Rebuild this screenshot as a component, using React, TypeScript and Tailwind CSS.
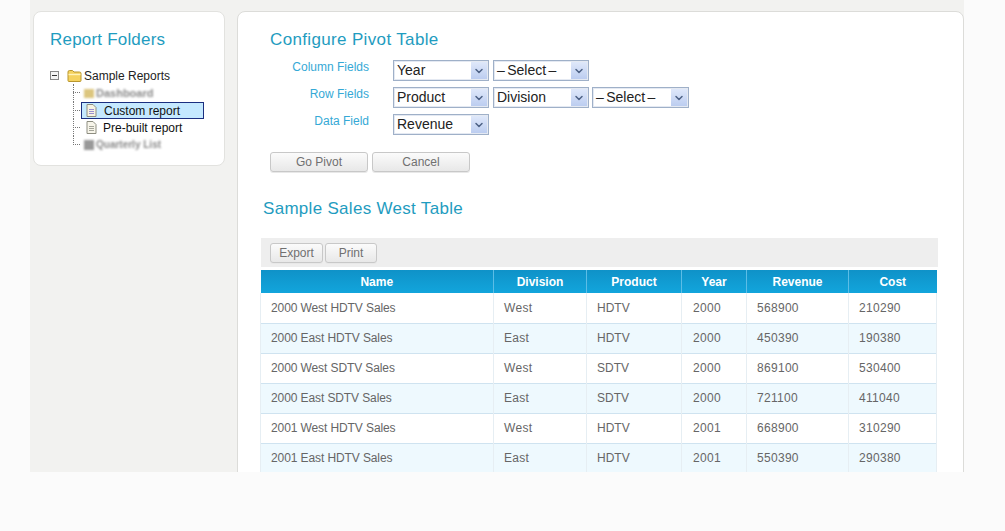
import { ChevronDown } from 'lucide-react';

const rows = [
  ['2000 West HDTV Sales', 'West', 'HDTV', '2000', '568900', '210290'],
  ['2000 East HDTV Sales', 'East', 'HDTV', '2000', '450390', '190380'],
  ['2000 West SDTV Sales', 'West', 'SDTV', '2000', '869100', '530400'],
  ['2000 East SDTV Sales', 'East', 'SDTV', '2000', '721100', '411040'],
  ['2001 West HDTV Sales', 'West', 'HDTV', '2001', '668900', '310290'],
  ['2001 East HDTV Sales', 'East', 'HDTV', '2001', '550390', '290380'],
];

const headers = [
  { label: 'Name', width: 'w-[233px]' },
  { label: 'Division', width: 'w-[93px]' },
  { label: 'Product', width: 'w-[95px]' },
  { label: 'Year', width: 'w-[65px]' },
  { label: 'Revenue', width: 'w-[102px]' },
  { label: 'Cost', width: 'w-[88px]' },
];

const cellTracking = ['tracking-[-0.1px]', 'tracking-[0.3px]', 'tracking-[0px]', 'tracking-[0.3px] pl-[11px]', 'tracking-[0.3px]', 'tracking-[0.3px]'];

const FolderIcon = () => (
  <svg width="15" height="13" viewBox="0 0 15 13" className="shrink-0">
    <path d="M1 11.5V3q0-1.5 1.5-1.5h3L7 3h5.5Q14 3 14 4.5v7q0 1-1 1H2q-1 0-1-1z" fill="#f5d25e" stroke="#b8962e" />
    <path d="M1.5 5.5h12" stroke="#fff3b8" strokeWidth="1.4" />
  </svg>
);

const DocIcon = ({ tint = false }: { tint?: boolean }) => (
  <svg width="11" height="13" viewBox="0 0 11 13" className="shrink-0">
    <path d="M1 .5h6l3 3v9H1z" fill={tint ? '#f6f3e2' : '#f7f5ea'} stroke="#8d8d80" />
    <path d="M3 5.5h5M3 7.5h5M3 9.5h5" stroke={tint ? '#9a8fd0' : '#a5a59a'} />
  </svg>
);

// tree connector, the dotted line plus the little stub into the row
const Branch = ({ last = false }: { last?: boolean }) => (
  <div className="w-[9px] h-full shrink-0 relative">
    <div className={`border-l border-dotted border-[#777] ml-[1px] ${last ? 'h-[9px]' : 'h-full'}`} />
    <div className="absolute left-[1px] top-[8px] w-[7px] border-t border-dotted border-[#777]" />
  </div>
);

const Select = ({ value, w = 'w-[96px]' }: { value: string; w?: string }) => (
  <div className={`${w} h-[21px] border border-[#9fb0c8] flex items-center justify-between pl-[3px] pr-[1px] bg-white shadow-[inset_0_0_0_1px_#e4e9f2]`}>
    <span className="text-[14px] text-[#222] [word-spacing:-1.5px]">{value}</span>
    <span className="w-[16px] h-[17px] bg-gradient-to-b from-[#dfe8fa] to-[#bccdf0] flex items-center justify-center">
      <ChevronDown size={12} strokeWidth={3} className="text-[#4d6185]" />
    </span>
  </div>
);

const FieldRow = ({ label, children }: { label: string; children: React.ReactNode }) => (
  <div className="flex h-[21px] gap-[24px]">
    <div className="w-[99px] text-right text-[12px] leading-[14px] text-[#35a9d6]">{label}</div>
    <div className="flex gap-[3px]">{children}</div>
  </div>
);

const GrayButton = ({ label, w }: { label: string; w: string }) => (
  <button className={`${w} h-[20px] rounded-[3px] border border-[#c8c8c8] bg-gradient-to-b from-[#fbfbfb] to-[#e8e8e8] text-[12px] text-[#707070] shadow-[0_1px_0_#e8e8e8]`}>
    {label}
  </button>
);

const App = () => {
  return (
    <div className="h-[531px] w-[1005px] overflow-hidden bg-[#fbfbfb] font-['Liberation_Sans',Arial,sans-serif]">
      <div className="ml-[30px] w-[934px] h-[472px] bg-[#f2f2f0] flex gap-[12px] pt-[11px] pl-[3px] overflow-hidden">
        {/* Report Folders */}
        <div className="w-[192px] h-[155px] shrink-0 bg-white rounded-[8px] border border-[#e2e2df] pt-[17px] pl-[16px]">
          <h2 className="text-[17px] leading-[22px] tracking-[0.2px] text-[#1f9cc0]">Report Folders</h2>
          <div className="mt-[16px] text-[12px] text-[#222]">
            <div className="flex items-center h-[17px]">
              <span className="w-[9px] h-[9px] border border-[#888] bg-[#f4f4f4] flex items-center justify-center shrink-0">
                <span className="w-[5px] h-[1px] bg-[#333]" />
              </span>
              <span className="ml-[8px] mr-[2px]"><FolderIcon /></span>
              <span>Sample Reports</span>
            </div>
            <div className="pl-[22px]">
              <div className="flex items-center h-[18px]">
                <Branch />
                <div className="flex items-center gap-[2px] pl-[3px] blur-[1.2px] text-[#8a8a8a] text-[11px] font-bold">
                  <span className="w-[10px] h-[9px] bg-[#dcc67e]" />
                  <span>Dashboard</span>
                </div>
              </div>
              <div className="flex items-center h-[17px]">
                <Branch />
                <div className="w-[123px] h-[17px] bg-[#c5e9ff] border border-[#1b2f80] flex items-center pl-[4px] gap-[7px]">
                  <DocIcon tint />
                  <span className="text-[#111]">Custom report</span>
                </div>
              </div>
              <div className="flex items-center h-[17px]">
                <Branch />
                <div className="flex items-center pl-[5px] gap-[6px]">
                  <DocIcon />
                  <span className="text-[#111]">Pre-built report</span>
                </div>
              </div>
              <div className="flex items-center h-[17px]">
                <Branch last />
                <div className="flex items-center gap-[2px] pl-[3px] blur-[1.2px] text-[#8a8a8a] text-[10px] font-bold">
                  <span className="w-[10px] h-[10px] bg-[#999]" />
                  <span>Quarterly List</span>
                </div>
              </div>
            </div>
          </div>
        </div>

        {/* Main panel */}
        <div className="w-[727px] h-[480px] shrink-0 bg-white rounded-t-[8px] border border-[#dcdcd9] pl-[23px]">
          <div className="pl-[9px] pt-[17px]">
            <h1 className="text-[17px] leading-[22px] tracking-[0.35px] text-[#1f9cc0]">Configure Pivot Table</h1>
            <div className="mt-[9px] flex flex-col gap-[6px]">
              <FieldRow label="Column Fields">
                <Select value="Year" />
                <Select value="– Select –" w="w-[96px] ml-[1px]" />
              </FieldRow>
              <FieldRow label="Row Fields">
                <Select value="Product" />
                <Select value="Division" w="w-[96px] ml-[1px]" />
                <Select value="– Select –" w="w-[97px]" />
              </FieldRow>
              <FieldRow label="Data Field">
                <Select value="Revenue" />
              </FieldRow>
            </div>
            <div className="mt-[17px] flex gap-[4px]">
              <GrayButton label="Go Pivot" w="w-[98px]" />
              <GrayButton label="Cancel" w="w-[98px]" />
            </div>
          </div>

          <h2 className="pl-[2px] mt-[26px] text-[17px] leading-[22px] tracking-[0.3px] text-[#1f9cc0]">Sample Sales West Table</h2>

          <div className="mt-[18px] w-[677px] h-[29px] bg-[#eeeeee] flex items-center gap-[2px] pl-[9px]">
            <GrayButton label="Export" w="w-[53px]" />
            <GrayButton label="Print" w="w-[52px]" />
          </div>

          <table className="mt-[3px] -ml-[1px] w-[676px] table-fixed border-collapse text-[12px]">
            <thead>
              <tr className="h-[23px] bg-gradient-to-b from-[#0f92c8] to-[#12a5dc]">
                {headers.map((h) => (
                  <th key={h.label} className={`${h.width} font-bold text-white text-center border-r border-[#5cbde6] last:border-r-0 p-0`}>
                    {h.label}
                  </th>
                ))}
              </tr>
            </thead>
            <tbody>
              {rows.map((row, i) => (
                <tr key={row[0]} className={`h-[30px] border-b border-[#cfe3f0] ${i % 2 === 1 ? 'bg-[#eef9fe]' : 'bg-white'}`}>
                  {row.map((cell, j) => (
                    <td key={j} className={`pl-[10px] p-0 text-[#666] border-x border-[#e6eef3] ${cellTracking[j]}`}>
                      {cell}
                    </td>
                  ))}
                </tr>
              ))}
            </tbody>
          </table>
        </div>
      </div>
    </div>
  );
};

export default App;
